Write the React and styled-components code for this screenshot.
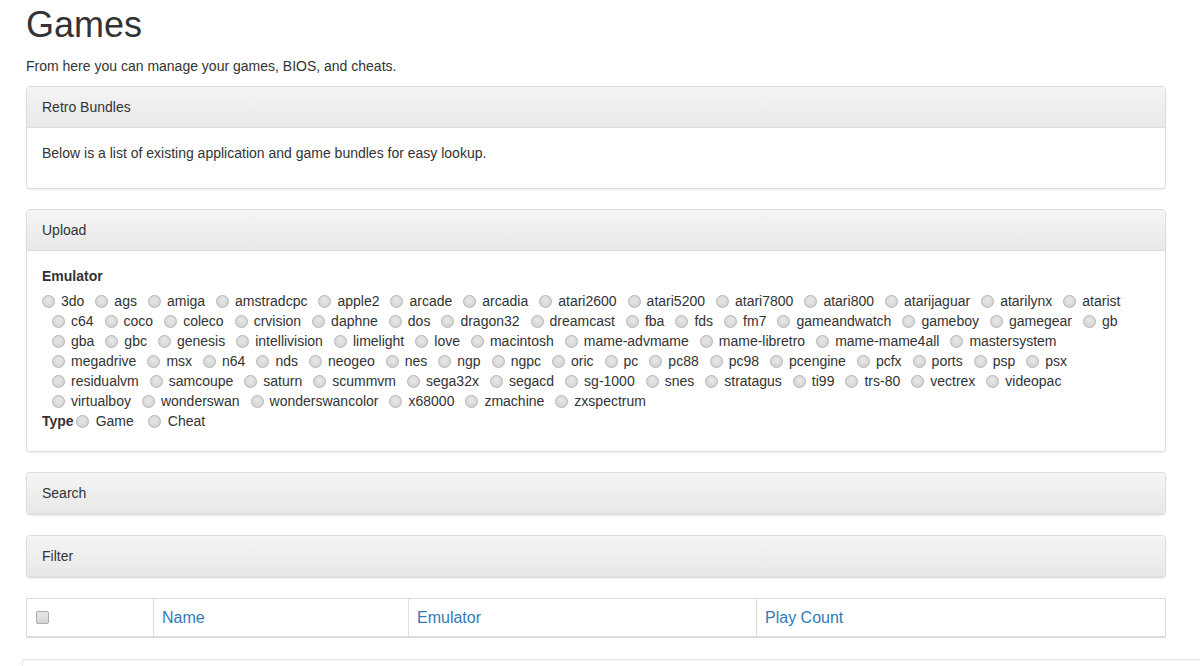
import React from "react";
import styled, { createGlobalStyle } from "styled-components";

const emulatorRows = [
  ["3do", "ags", "amiga", "amstradcpc", "apple2", "arcade", "arcadia", "atari2600", "atari5200", "atari7800", "atari800", "atarijaguar", "atarilynx", "atarist"],
  ["c64", "coco", "coleco", "crvision", "daphne", "dos", "dragon32", "dreamcast", "fba", "fds", "fm7", "gameandwatch", "gameboy", "gamegear", "gb"],
  ["gba", "gbc", "genesis", "intellivision", "limelight", "love", "macintosh", "mame-advmame", "mame-libretro", "mame-mame4all", "mastersystem"],
  ["megadrive", "msx", "n64", "nds", "neogeo", "nes", "ngp", "ngpc", "oric", "pc", "pc88", "pc98", "pcengine", "pcfx", "ports", "psp", "psx"],
  ["residualvm", "samcoupe", "saturn", "scummvm", "sega32x", "segacd", "sg-1000", "snes", "stratagus", "ti99", "trs-80", "vectrex", "videopac"],
  ["virtualboy", "wonderswan", "wonderswancolor", "x68000", "zmachine", "zxspectrum"],
];

const GlobalStyle = createGlobalStyle`
  html, body {
    margin: 0;
    padding: 0;
    background: #fff;
  }
  body {
    font-family: "Liberation Sans", Arial, Helvetica, sans-serif;
    font-size: 14px;
    line-height: 20px;
    color: #333;
    overflow: hidden;
  }
`;

const App = () => {
  return (
    <>
      <GlobalStyle />
      <Page>
        <Title>Games</Title>
        <Lead>From here you can manage your games, BIOS, and cheats.</Lead>

        <Panel>
          <PanelHeading>Retro Bundles</PanelHeading>
          <PanelBody>
            <p>Below is a list of existing application and game bundles for easy lookup.</p>
          </PanelBody>
        </Panel>

        <Panel>
          <PanelHeading>Upload</PanelHeading>
          <PanelBody $bottom={20}>
            <FieldLabel>Emulator</FieldLabel>
            {emulatorRows.map((row, i) => (
              <RadioRow key={i} $indent={i > 0}>
                {row.map((name) => (
                  <Option key={name}>
                    <Radio type="radio" name="emulator" />
                    {name}
                  </Option>
                ))}
              </RadioRow>
            ))}
            <RadioRow>
              <InlineLabel>Type</InlineLabel>
              <Option $type>
                <Radio type="radio" name="type" $type />
                Game
              </Option>
              <Option $type>
                <Radio type="radio" name="type" $type />
                Cheat
              </Option>
            </RadioRow>
          </PanelBody>
        </Panel>

        <Panel>
          <PanelHeading>Search</PanelHeading>
        </Panel>

        <Panel>
          <PanelHeading>Filter</PanelHeading>
        </Panel>

        <Table>
          <colgroup>
            <col style={{ width: 127 }} />
            <col style={{ width: 255 }} />
            <col style={{ width: 348 }} />
            <col />
          </colgroup>
          <thead>
            <tr>
              <Th>
                <Check type="checkbox" />
              </Th>
              <Th><HeadLink href="#">Name</HeadLink></Th>
              <Th><HeadLink href="#">Emulator</HeadLink></Th>
              <Th><HeadLink href="#">Play Count</HeadLink></Th>
            </tr>
          </thead>
        </Table>

        <Footer />
      </Page>
    </>
  );
};

const Page = styled.div`
  width: 1140px;
  padding: 0 0 0 26px;
`;

const Title = styled.h1`
  margin: 5px 0 11px;
  font-size: 36px;
  font-weight: 500;
  line-height: 1.1;
  color: #333;
`;

const Lead = styled.p`
  margin: 0 0 10px;
`;

const Panel = styled.div`
  margin-bottom: 20px;
  background: #fff;
  border: 1px solid #ddd;
  border-radius: 4px;
  box-shadow: 0 1px 2px rgba(0, 0, 0, 0.075);
  overflow: hidden;
`;

const PanelHeading = styled.div`
  padding: 10px 15px;
  line-height: 20px;
  color: #333;
  background: linear-gradient(to bottom, #f5f5f5 0%, #e8e8e8 100%);
  border-bottom: 1px solid #ddd;
  border-radius: 3px 3px 0 0;
`;

const PanelBody = styled.div`
  padding: 15px 15px ${(p) => p.$bottom || 15}px;

  p {
    margin: 0 0 10px;
  }
`;

const FieldLabel = styled.div`
  font-weight: bold;
  margin-bottom: 5px;
`;

const InlineLabel = styled.span`
  font-weight: bold;
`;

const RadioRow = styled.div`
  display: flex;
  align-items: center;
  height: 20px;
  white-space: nowrap;
  padding-left: ${(p) => (p.$indent ? 10 : 0)}px;
`;

const Option = styled.label`
  display: inline-flex;
  align-items: center;
  margin-right: ${(p) => (p.$type ? 12 : 11)}px;
`;

const Radio = styled.input`
  appearance: none;
  -webkit-appearance: none;
  box-sizing: border-box;
  width: 13px;
  height: 13px;
  margin: 1px ${(p) => (p.$type ? 7 : 6)}px 0 ${(p) => (p.$type ? 2 : 0)}px;
  border-radius: 50%;
  border: 1px solid #b4b4b4;
  background: radial-gradient(circle at 50% 40%, #e9e9e9 0%, #d6d6d6 70%, #cfcfcf 100%);
`;

const Table = styled.table`
  width: 100%;
  border-collapse: collapse;
  table-layout: fixed;
  margin-bottom: 21px;
`;

const Th = styled.th`
  padding: 8px;
  text-align: left;
  font-weight: normal;
  font-size: 16px;
  line-height: 21px;
  border: 1px solid #ddd;
  border-bottom: 2px solid #ddd;
  vertical-align: middle;
`;

const HeadLink = styled.a`
  color: #337ab7;
  text-decoration: none;
`;

const Check = styled.input`
  appearance: none;
  -webkit-appearance: none;
  box-sizing: border-box;
  display: block;
  width: 13px;
  height: 13px;
  margin: 1px 0 0 1px;
  border: 1px solid #ababab;
  border-radius: 2px;
  background: linear-gradient(to bottom, #e8e8e8, #d4d4d4);
`;

const Footer = styled.div`
  height: 20px;
  margin-left: -4px;
  margin-right: -34px;
  border-top: 1px solid #e3e3e3;
  border-left: 1px solid #eee;
  box-shadow: inset 0 1px 2px rgba(0, 0, 0, 0.04);
`;

export default App;
